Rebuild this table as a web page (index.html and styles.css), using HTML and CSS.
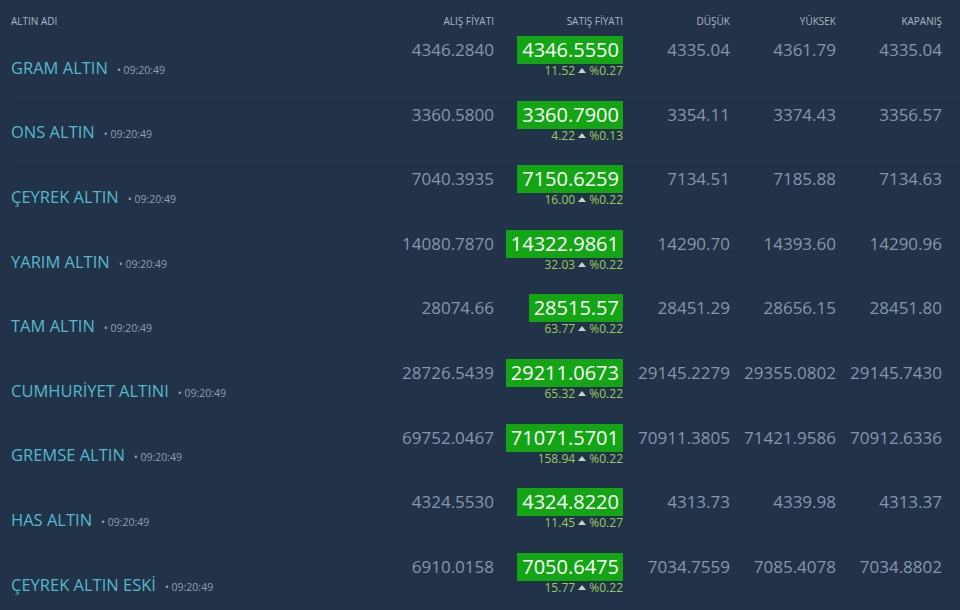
FILE: index.html
```html
<!DOCTYPE html>
<html lang="tr">
	<head>
		<meta charset="UTF-8" />
		<meta name="viewport" content="width=device-width, initial-scale=1.0" />
		<title>Altın Fiyatları</title>
		<link rel="stylesheet" href="styles.css">
	</head>
	<body>
		<div class="board">
			<div class="row head">
				<div class="name-cell">ALTIN ADI</div>
				<div class="num">ALIŞ FİYATI</div>
				<div class="num">SATIŞ FİYATI</div>
				<div class="num">DÜŞÜK</div>
				<div class="num">YÜKSEK</div>
				<div class="num">KAPANIŞ</div>
			</div>

			<div class="row">
				<div class="name-cell"><span class="name">GRAM ALTIN</span><span class="time">• 09:20:49</span></div>
				<div class="num">4346.2840</div>
				<div class="num sell"><span class="box">4346.5550</span><span class="change">11.52 <i class="up"></i> %0.27</span></div>
				<div class="num">4335.04</div>
				<div class="num">4361.79</div>
				<div class="num">4335.04</div>
			</div>

			<div class="row">
				<div class="name-cell"><span class="name">ONS ALTIN</span><span class="time">• 09:20:49</span></div>
				<div class="num">3360.5800</div>
				<div class="num sell"><span class="box">3360.7900</span><span class="change">4.22 <i class="up"></i> %0.13</span></div>
				<div class="num">3354.11</div>
				<div class="num">3374.43</div>
				<div class="num">3356.57</div>
			</div>

			<div class="row">
				<div class="name-cell"><span class="name">ÇEYREK ALTIN</span><span class="time">• 09:20:49</span></div>
				<div class="num">7040.3935</div>
				<div class="num sell"><span class="box">7150.6259</span><span class="change">16.00 <i class="up"></i> %0.22</span></div>
				<div class="num">7134.51</div>
				<div class="num">7185.88</div>
				<div class="num">7134.63</div>
			</div>

			<div class="row">
				<div class="name-cell"><span class="name">YARIM ALTIN</span><span class="time">• 09:20:49</span></div>
				<div class="num">14080.7870</div>
				<div class="num sell"><span class="box">14322.9861</span><span class="change">32.03 <i class="up"></i> %0.22</span></div>
				<div class="num">14290.70</div>
				<div class="num">14393.60</div>
				<div class="num">14290.96</div>
			</div>

			<div class="row">
				<div class="name-cell"><span class="name">TAM ALTIN</span><span class="time">• 09:20:49</span></div>
				<div class="num">28074.66</div>
				<div class="num sell"><span class="box">28515.57</span><span class="change">63.77 <i class="up"></i> %0.22</span></div>
				<div class="num">28451.29</div>
				<div class="num">28656.15</div>
				<div class="num">28451.80</div>
			</div>

			<div class="row">
				<div class="name-cell"><span class="name">CUMHURİYET ALTINI</span><span class="time">• 09:20:49</span></div>
				<div class="num">28726.5439</div>
				<div class="num sell"><span class="box">29211.0673</span><span class="change">65.32 <i class="up"></i> %0.22</span></div>
				<div class="num">29145.2279</div>
				<div class="num">29355.0802</div>
				<div class="num">29145.7430</div>
			</div>

			<div class="row">
				<div class="name-cell"><span class="name">GREMSE ALTIN</span><span class="time">• 09:20:49</span></div>
				<div class="num">69752.0467</div>
				<div class="num sell"><span class="box">71071.5701</span><span class="change">158.94 <i class="up"></i> %0.22</span></div>
				<div class="num">70911.3805</div>
				<div class="num">71421.9586</div>
				<div class="num">70912.6336</div>
			</div>

			<div class="row">
				<div class="name-cell"><span class="name">HAS ALTIN</span><span class="time">• 09:20:49</span></div>
				<div class="num">4324.5530</div>
				<div class="num sell"><span class="box">4324.8220</span><span class="change">11.45 <i class="up"></i> %0.27</span></div>
				<div class="num">4313.73</div>
				<div class="num">4339.98</div>
				<div class="num">4313.37</div>
			</div>

			<div class="row">
				<div class="name-cell"><span class="name">ÇEYREK ALTIN ESKİ</span><span class="time">• 09:20:49</span></div>
				<div class="num">6910.0158</div>
				<div class="num sell"><span class="box">7050.6475</span><span class="change">15.77 <i class="up"></i> %0.22</span></div>
				<div class="num">7034.7559</div>
				<div class="num">7085.4078</div>
				<div class="num">7034.8802</div>
			</div>
		</div>
	</body>
</html>
```

FILE: styles.css
```css
body {
	font-family: "Open Sans", "Liberation Sans", sans-serif;
	background-color: #223349;
	color: #8596ab;
	margin: 0;
}
.board {
	width: 960px;
}
.row {
	display: grid;
	grid-template-columns: 1fr 110px 129px 107px 106px 106px;
	margin-left: 11px;
	padding-right: 18px;
	height: 64.6px;
	box-sizing: border-box;
	border-bottom: 1px solid #24364c;
}
.row.head {
	height: 33px;
	padding-top: 14px;
	font-size: 10px;
	color: #a9b5c4;
	border-bottom: none;
}
.num {
	text-align: right;
}
.row:not(.head) .num {
	padding-top: 3px;
	font-size: 17px;
	line-height: 28px;
}
.name-cell {
	display: flex;
	align-items: baseline;
	gap: 9px;
}
.row:not(.head) .name-cell {
	align-self: center;
	padding-top: 5px;
}
.name {
	font-size: 16.5px;
	color: #55b9cb;
}
.time {
	font-size: 10.5px;
	color: #8f9fb3;
}
.sell {
	display: flex;
	flex-direction: column;
	align-items: flex-end;
}
.box {
	background-color: #14a514;
	color: #fff;
	font-size: 20px;
	line-height: 28px;
	padding: 0 4px 0 5px;
}
.change {
	font-size: 12px;
	line-height: 14px;
	color: #98cb5c;
}
.up {
	display: inline-block;
	width: 0;
	height: 0;
	border-left: 4px solid transparent;
	border-right: 4px solid transparent;
	border-bottom: 5px solid #c8d6c0;
	vertical-align: 2px;
}
```
